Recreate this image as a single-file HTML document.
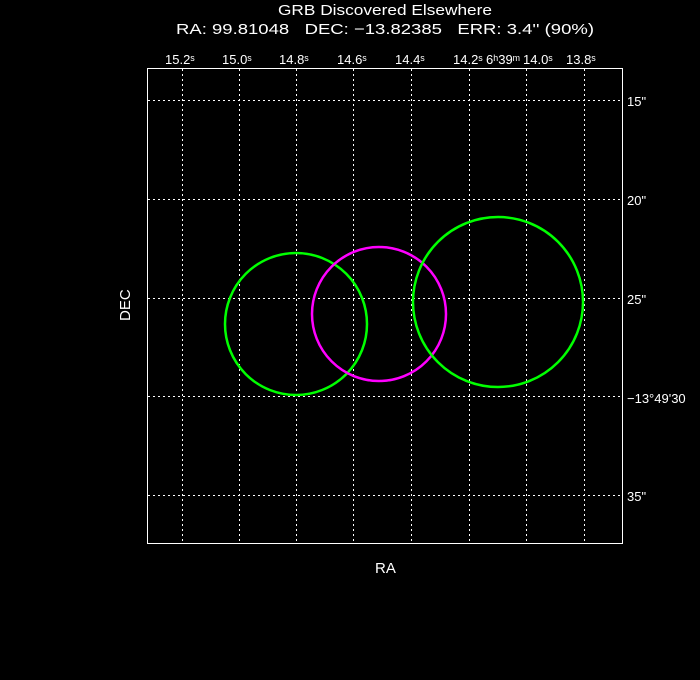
<!DOCTYPE html><html><head><style>body{margin:0;background:#000}text{white-space:pre}</style></head><body>
<svg width="700" height="680" xmlns="http://www.w3.org/2000/svg" style="display:block;font-family:'Liberation Sans',sans-serif" fill="#fff">
<rect width="700" height="680" fill="#000"/>
<g stroke="#fff" stroke-width="1" stroke-dasharray="2,3" fill="none">
<path d="M182.5 69V543M239.5 69V543M296.5 69V543M353.5 69V543M411.5 69V543M469.5 69V543M526.5 69V543M584.5 69V543"/>
<path d="M148 100.5H622M148 199.5H622M148 298.5H622M148 396.5H622M148 495.5H622"/>
</g>
<rect x="147.5" y="68.5" width="475" height="475" fill="none" stroke="#fff"/>
<circle cx="296" cy="324" r="71" fill="none" stroke="#00ff00" stroke-width="2.5"/>
<circle cx="379" cy="314" r="67" fill="none" stroke="#ff00ff" stroke-width="2.5"/>
<circle cx="498" cy="302" r="85" fill="none" stroke="#00ff00" stroke-width="2.5"/>
<g font-size="15">
<text x="278" y="15" textLength="214" lengthAdjust="spacingAndGlyphs">GRB Discovered Elsewhere</text>
<text x="176" y="34" textLength="418" lengthAdjust="spacingAndGlyphs">RA: 99.81048   DEC: −13.82385   ERR: 3.4'' (90%)</text>
<text x="375" y="573">RA</text>
<text transform="translate(130,321) rotate(-90)">DEC</text>
</g>
<g font-size="13">
<text x="165" y="64">15.2ˢ</text><text x="222" y="64">15.0ˢ</text><text x="279" y="64">14.8ˢ</text>
<text x="337" y="64">14.6ˢ</text><text x="395" y="64">14.4ˢ</text><text x="453" y="64">14.2ˢ</text>
<text x="486" y="64">6ʰ39ᵐ</text><text x="523" y="64">14.0ˢ</text><text x="566" y="64">13.8ˢ</text>
<text x="627" y="106">15"</text><text x="627" y="205">20"</text><text x="627" y="304">25"</text>
<text x="627" y="403">−13°49'30</text><text x="627" y="501">35"</text>
</g>
</svg>
</body></html>
